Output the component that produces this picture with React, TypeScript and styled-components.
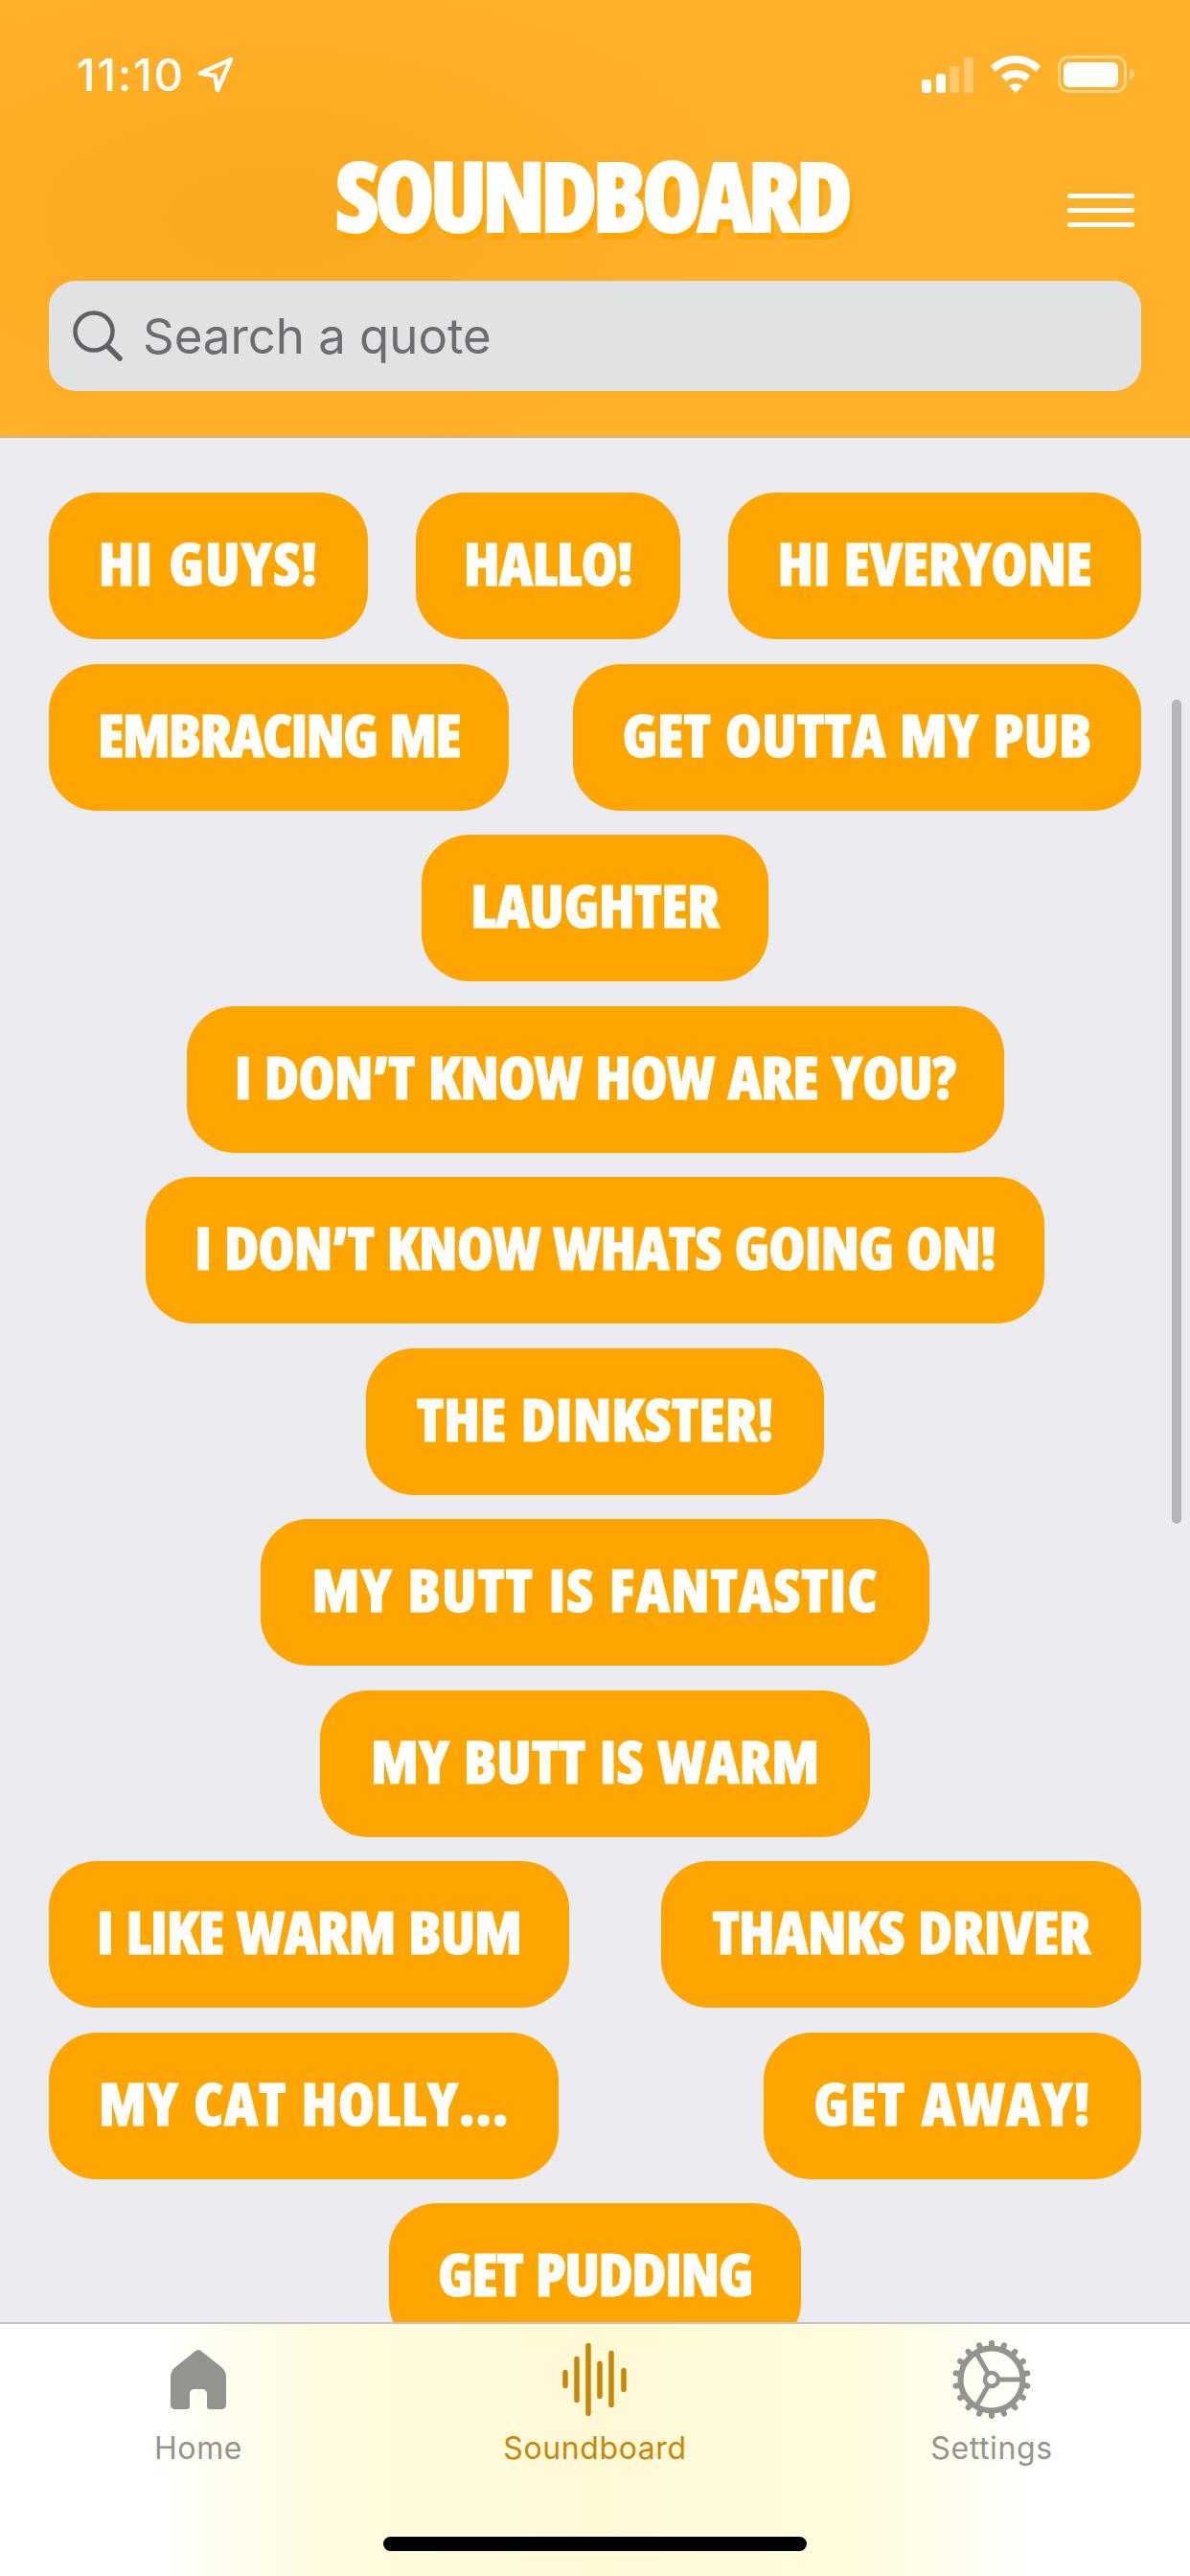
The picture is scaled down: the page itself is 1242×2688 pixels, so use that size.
import React from 'react';
import styled, { createGlobalStyle } from 'styled-components';

const GlobalStyle = createGlobalStyle`
  html, body { margin: 0; padding: 0; background: #ebebf0; }
  * { box-sizing: border-box; }
`;

const Screen = styled.div`
  position: relative;
  width: 1242px;
  height: 2688px;
  display: flex;
  flex-direction: column;
  overflow: hidden;
  background: #ebebf0;
  font-family: Inter, "Liberation Sans", sans-serif;
`;

const Header = styled.header`
  flex: none;
  height: 457px;
  border-bottom: 2px solid #cbb486;
  background:
    radial-gradient(ellipse 520px 260px at 280px 230px, rgba(247, 166, 28, 0.75), rgba(247, 166, 28, 0)),
    #ffb129;
`;

const StatusBar = styled.div`
  height: 167px;
  padding: 58px 58px 0 80px;
  display: flex;
  justify-content: space-between;
  align-items: flex-start;
`;

const TimeGroup = styled.div`
  display: flex;
  align-items: center;
  gap: 13px;
  height: 40px;
`;

const Time = styled.span`
  font-size: 47px;
  font-weight: 500;
  line-height: 40px;
  letter-spacing: 2px;
  color: #fff;
`;

const StatusIcons = styled.div`
  display: flex;
  align-items: flex-start;
  gap: 18px;
`;

const TitleRow = styled.div`
  height: 126px;
  padding: 0 58px 0 51px;
  display: grid;
  grid-template-columns: 1fr auto 1fr;
  align-items: start;
`;

const Title = styled.h1`
  grid-column: 2;
  margin: 0;
  font-family: "Open Sans", sans-serif;
  font-stretch: 75%;
  font-weight: 800;
  font-size: 101px;
  line-height: 72px;
  letter-spacing: -5px;
  color: #fff;
  -webkit-text-stroke: 2px #fff;
  text-shadow: 4px 8px 0 #ffa600;
`;

const MenuButton = styled.button`
  grid-column: 3;
  justify-self: end;
  margin-top: 35px;
  padding: 0;
  width: 70px;
  height: 35px;
  border: 0;
  background: none;
  display: flex;
  flex-direction: column;
  justify-content: space-between;
`;

const MenuLine = styled.span`
  display: block;
  height: 5px;
  border-radius: 3px;
  background: #fff;
`;

const SearchBar = styled.div`
  margin: 0 51px;
  height: 115px;
  padding-left: 25px;
  display: flex;
  align-items: center;
  gap: 21px;
  border-radius: 28px;
  background: #e1e2e4;
`;

const SearchText = styled.span`
  font-size: 51px;
  letter-spacing: -0.05px;
  color: #6b6d72;
`;

const Main = styled.main`
  flex: 1;
  min-height: 0;
  overflow: hidden;
  padding: 57px 51px 0;
  display: flex;
  flex-direction: column;
  gap: 25.5px;
`;

const Row = styled.div`
  flex: none;
  display: flex;
  justify-content: space-between;
`;

const QuoteButton = styled.button<{ $w: number; $track: number }>`
  flex: none;
  width: ${(p) => p.$w}px;
  height: 153px;
  padding: 0 0 7px;
  border: 0;
  border-radius: 50px;
  background: #ffa500;
  color: #fff;
  font-family: "Open Sans", sans-serif;
  font-stretch: 75%;
  font-weight: 800;
  font-size: 62px;
  line-height: 1;
  letter-spacing: ${(p) => p.$track}px;
  word-spacing: 4px;
  white-space: nowrap;
  -webkit-text-stroke: 1px #fff;
  &:only-child { margin: 0 auto; }
`;

const ScrollThumb = styled.div`
  position: absolute;
  top: 730px;
  right: 9px;
  width: 10px;
  height: 860px;
  border-radius: 5px;
  background: #b4b4b9;
`;

const TabBar = styled.nav`
  flex: none;
  height: 265px;
  border-top: 2px solid #c4c4c6;
  padding-top: 18px;
  display: flex;
  flex-direction: column;
  background: linear-gradient(90deg, #ffffff 12%, #fffbdf 27%, #fff9d6 50%, #fffbdc 71%, #ffffff 88%);
`;

const Tabs = styled.div`
  display: grid;
  grid-template-columns: 414px 414px 414px;
`;

const Tab = styled.div<{ $active?: boolean }>`
  display: flex;
  flex-direction: column;
  align-items: center;
  gap: 12px;
  color: ${(p) => (p.$active ? '#c98607' : '#94938f')};
`;

const TabIcon = styled.div`
  height: 80px;
  display: flex;
  align-items: center;
`;

const TabLabel = styled.span`
  font-size: 32px;
  line-height: 40px;
  letter-spacing: 0.6px;
`;

const HomeIndicator = styled.div`
  width: 442px;
  height: 15px;
  margin: 72px auto 0;
  border-radius: 8px;
  background: #000;
`;

const rows: [string, number, number][][] = [
  [['HI GUYS!', 333, 1], ['HALLO!', 276, -1], ['HI EVERYONE', 431, -0.45]],
  [['EMBRACING ME', 480, -1.9], ['GET OUTTA MY PUB', 593, -0.05]],
  [['LAUGHTER', 362, -0.45]],
  [['I DON’T KNOW HOW ARE YOU?', 853, -0.8]],
  [['I DON’T KNOW WHATS GOING ON!', 938, -1]],
  [['THE DINKSTER!', 478, 0]],
  [['MY BUTT IS FANTASTIC', 698, 0.8]],
  [['MY BUTT IS WARM', 574, -0.2]],
  [['I LIKE WARM BUM', 543, -1.1], ['THANKS DRIVER', 501, -0.7]],
  [['MY CAT HOLLY...', 532, 0.5], ['GET AWAY!', 394, 1.25]],
  [['GET PUDDING', 430, -1.5]],
];

const LocationIcon = () => (
  <svg width="38" height="38" viewBox="0 0 38 38" fill="none">
    <path d="M35 3 L3 17.5 L18.5 20 L21 35 Z" stroke="#fff" strokeWidth="4.5" strokeLinejoin="round" />
  </svg>
);

const SignalIcon = () => (
  <svg width="54" height="39" viewBox="0 0 54 39" fill="#fff">
    <rect x="0" y="25" width="10" height="14" rx="3" />
    <rect x="15" y="19" width="10" height="20" rx="3" />
    <rect x="29" y="11" width="10" height="28" rx="3" opacity="0.3" />
    <rect x="44" y="2" width="10" height="37" rx="3" opacity="0.3" />
  </svg>
);

const WifiIcon = () => (
  <svg width="52" height="39" viewBox="0 0 52 39" fill="#fff">
    <path d="M26 0 C36 0 45 4 52 11 L47 17 C41 11 34 8 26 8 C18 8 11 11 5 17 L0 11 C7 4 16 0 26 0 Z" />
    <path d="M26 15 C32 15 37 17 41 21 L36 27 C33 24 30 23 26 23 C22 23 19 24 16 27 L11 21 C15 17 20 15 26 15 Z" />
    <path d="M26 29 C29 29 31 30 33 31.500 L26 39 L19 31.500 C21 30 23 29 26 29 Z" />
  </svg>
);

const BatteryIcon = () => (
  <svg width="80" height="39" viewBox="0 0 80 39" fill="none">
    <rect x="1.500" y="1.500" width="69" height="36" rx="10" stroke="#fff" strokeOpacity="0.45" strokeWidth="3" />
    <rect x="6" y="7" width="57" height="26" rx="6" fill="#fff" />
    <path d="M75 14 C78 15 80 17 80 19.500 C80 22 78 24 75 25 Z" fill="#fff" fillOpacity="0.45" />
  </svg>
);

const SearchIcon = () => (
  <svg width="52" height="53" viewBox="0 0 52 53" fill="none" stroke="#5f6166" strokeWidth="4.500" strokeLinecap="round">
    <circle cx="22" cy="22" r="19.500" />
    <path d="M36 37 L49 50" strokeWidth="5.500" />
  </svg>
);

const HomeIcon = () => (
  <svg width="58" height="62" viewBox="0 0 58 62" fill="currentColor">
    <path d="M29 0 C30 0 31 .5 32 1.300 L53 18 C56 20.500 58 24 58 28 L58 57 C58 60 56 62 53 62 L41 62 C39 62 38 61 38 59 L38 46 C38 43 36 41 33 41 L25 41 C22 41 20 43 20 46 L20 59 C20 61 19 62 17 62 L5 62 C2 62 0 60 0 57 L0 28 C0 24 2 20.500 5 18 L26 1.300 C27 .5 28 0 29 0 Z" />
  </svg>
);

const waveBars: [number, number, number][] = [
  [3, 28, 47], [15, 14, 62], [27, 0, 76], [39, 19, 58], [51, 8, 67], [64, 26, 51],
];

const WaveIcon = () => (
  <svg width="68" height="76" viewBox="0 0 68 76" stroke="currentColor" strokeWidth="5.500" strokeLinecap="round">
    {waveBars.map(([x, y1, y2]) => (
      <line key={x} x1={x} x2={x} y1={y1 + 2.500} y2={y2 - 2.500} />
    ))}
  </svg>
);

const teeth = Array.from({ length: 18 }, (_, i) => i * 20 + 10);

const GearIcon = () => (
  <svg width="82" height="82" viewBox="-41 -41 82 82" fill="none" stroke="currentColor">
    <circle r="32.500" strokeWidth="6" />
    {teeth.map((a) => (
      <line key={a} x1="33" y1="0" x2="38" y2="0" strokeWidth="6" strokeLinecap="round" transform={`rotate(${a})`} />
    ))}
    <circle r="7" strokeWidth="4.500" />
    <line x1="8" y1="0" x2="31" y2="0" strokeWidth="5" />
    <line x1="8" y1="0" x2="32" y2="0" strokeWidth="5" transform="rotate(120)" />
    <line x1="8" y1="0" x2="32" y2="0" strokeWidth="5" transform="rotate(240)" />
  </svg>
);

export default function App() {
  return (
    <Screen>
      <GlobalStyle />
      <Header>
        <StatusBar>
          <TimeGroup>
            <Time>11:10</Time>
            <LocationIcon />
          </TimeGroup>
          <StatusIcons>
            <SignalIcon />
            <WifiIcon />
            <BatteryIcon />
          </StatusIcons>
        </StatusBar>
        <TitleRow>
          <Title>SOUNDBOARD</Title>
          <MenuButton aria-label="Menu">
            <MenuLine />
            <MenuLine />
            <MenuLine />
          </MenuButton>
        </TitleRow>
        <SearchBar>
          <SearchIcon />
          <SearchText>Search a quote</SearchText>
        </SearchBar>
      </Header>
      <Main>
        {rows.map((row) => (
          <Row key={row[0][0]}>
            {row.map(([label, w, track]) => (
              <QuoteButton key={label} $w={w} $track={track}>{label}</QuoteButton>
            ))}
          </Row>
        ))}
      </Main>
      <ScrollThumb />
      <TabBar>
        <Tabs>
          <Tab>
            <TabIcon><HomeIcon /></TabIcon>
            <TabLabel>Home</TabLabel>
          </Tab>
          <Tab $active>
            <TabIcon><WaveIcon /></TabIcon>
            <TabLabel>Soundboard</TabLabel>
          </Tab>
          <Tab>
            <TabIcon><GearIcon /></TabIcon>
            <TabLabel>Settings</TabLabel>
          </Tab>
        </Tabs>
        <HomeIndicator />
      </TabBar>
    </Screen>
  );
}
